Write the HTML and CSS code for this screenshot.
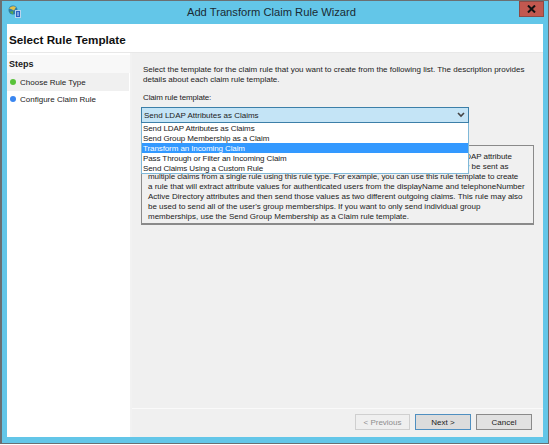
FILE: index.html
```html
<!DOCTYPE html>
<html lang="en">
<head>
  <meta charset="UTF-8">
  <title>Add Transform Claim Rule Wizard</title>
  <link rel="stylesheet" href="styles.css">
</head>
<body>
  <div class="window">
    <div class="titlebar">
      <svg class="app-icon" width="13" height="13" viewBox="0 0 13 13">
        <circle cx="5" cy="5" r="4.5" fill="#2f7fa8"/>
        <path d="M1 3.5 Q4 0 8 2 L6 5.5 L3 4 Z" fill="#e3c04a"/>
        <path d="M1.5 7 L5 6 L5 9.5 Z" fill="#5aa84a"/>
        <rect x="7.5" y="5.5" width="5" height="7" fill="#2b5fc0" stroke="#b8d4ee" stroke-width="1"/>
        <path d="M9 8 H11 M9 10 H11" stroke="#cfe2f5" stroke-width="1"/>
      </svg>
      <span class="title">Add Transform Claim Rule Wizard</span>
      <div class="close-btn">
        <svg width="9" height="8" viewBox="0 0 9 8"><path d="M1 0.5 L8 7.5 M8 0.5 L1 7.5" stroke="#111" stroke-width="2"/></svg>
      </div>
    </div>
    <div class="client">
      <div class="page-header">Select Rule Template</div>
      <div class="main">
        <div class="steps">
          <div class="steps-head">Steps</div>
          <div class="step current"><span class="dot green"></span>Choose Rule Type</div>
          <div class="step"><span class="dot blue"></span>Configure Claim Rule</div>
        </div>
        <div class="content">
          <div class="pane">
            <p class="intro">Select the template for the claim rule that you want to create from the following list. The description provides<br>details about each claim rule template.</p>
            <label class="field-label">Claim rule template:</label>
            <div class="combo-wrap">
              <div class="combo">
                <span>Send LDAP Attributes as Claims</span>
                <svg width="8" height="6" viewBox="0 0 8 6"><path d="M1 1 L4 4 L7 1" fill="none" stroke="#444" stroke-width="1.6"/></svg>
              </div>
              <ul class="dropdown">
                <li>Send LDAP Attributes as Claims</li>
                <li>Send Group Membership as a Claim</li>
                <li class="selected">Transform an Incoming Claim</li>
                <li>Pass Through or Filter an Incoming Claim</li>
                <li>Send Claims Using a Custom Rule</li>
              </ul>
            </div>
            <div class="description">
              <div class="tight">Using the Send LDAP Attributes as Claims rule template you can select attributes from an LDAP attribute</div>
              <div>store such as Active Directory to send as claims to the relying party. Multiple attributes may be sent as</div>
              <div class="tight">multiple claims from a single rule using this rule type. For example, you can use this rule template to create</div>
              <div>a rule that will extract attribute values for authenticated users from the displayName and telephoneNumber</div>
              <div>Active Directory attributes and then send those values as two different outgoing claims. This rule may also</div>
              <div>be used to send all of the user's group memberships. If you want to only send individual group</div>
              <div>memberships, use the Send Group Membership as a Claim rule template.</div>
            </div>
          </div>
          <div class="button-bar">
            <button class="btn disabled">&lt; Previous</button>
            <button class="btn default">Next &gt;</button>
            <button class="btn cancel">Cancel</button>
          </div>
        </div>
      </div>
    </div>
  </div>
</body>
</html>
```

FILE: styles.css
```css
html, body {
  margin: 0;
  padding: 0;
}

body {
  width: 549px;
  height: 445px;
  overflow: hidden;
  background-color: #fff;
  font-family: "Liberation Sans", Arial, sans-serif;
  font-size: 8px;
  color: #222;
}

.window {
  box-sizing: border-box;
  width: 549px;
  height: 444px;
  display: flex;
  flex-direction: column;
  background-color: #63c6e8;
  border: 1px solid #6b6f72;
  border-left-width: 2px;
  padding: 0 5px 6px 5px;
}

.titlebar {
  height: 23px;
  flex-shrink: 0;
  display: flex;
  align-items: center;
}

.app-icon {
  margin-left: 1px;
  margin-top: -2px;
}

.title {
  flex: 1;
  text-align: center;
  font-size: 11.2px;
  color: #1a2a33;
  margin-top: -2px;
  padding-left: 3px;
}

.close-btn {
  box-sizing: border-box;
  width: 25px;
  height: 16px;
  align-self: flex-start;
  margin-right: -1px;
  background-color: #c2584f;
  border: 1px solid #8d4a45;
  display: flex;
  align-items: center;
  justify-content: center;
}

.client {
  flex: 1;
  display: flex;
  flex-direction: column;
  background-color: #fff;
  min-height: 0;
}

.page-header {
  box-sizing: border-box;
  height: 29px;
  flex-shrink: 0;
  padding: 9px 0 0 2px;
  font-size: 11.7px;
  line-height: 13px;
  font-weight: bold;
  color: #111;
  border-bottom: 1px solid #e8e8e8;
}

.main {
  flex: 1;
  display: flex;
  min-height: 0;
}

.steps {
  width: 123px;
  flex-shrink: 0;
  border-right: 2px solid #f2f2f2;
  padding-top: 2px;
}

.steps-head {
  height: 18px;
  line-height: 18px;
  padding-left: 2px;
  font-size: 9px;
  font-weight: bold;
  background-color: #f8f8f8;
}

.step {
  height: 16px;
  display: flex;
  align-items: center;
  padding-left: 3px;
}

.step.current {
  height: 18px;
  margin-right: 1px;
  background-color: #f0f0f0;
}

.dot {
  width: 6px;
  height: 6px;
  border-radius: 50%;
  margin-right: 4px;
}

.dot.green {
  background-color: #58c23a;
}

.dot.blue {
  background-color: #3a86f0;
}

.content {
  flex: 1;
  display: flex;
  flex-direction: column;
  background-color: #f0f0f0;
  min-width: 0;
}

.pane {
  flex: 1;
  padding: 12px 9px 0 9px;
}

.intro {
  margin: 0 0 7px;
  padding-left: 2px;
  line-height: 10px;
  white-space: nowrap;
}

.field-label {
  display: block;
  padding-left: 2px;
  line-height: 12px;
  margin-bottom: 3px;
  letter-spacing: -0.15px;
}

.combo-wrap {
  position: relative;
  width: 328px;
}

.combo {
  box-sizing: border-box;
  height: 16px;
  display: flex;
  align-items: center;
  justify-content: space-between;
  padding: 0 3px 0 2px;
  background-color: #c4e4f6;
  border: 1px solid #3c7fa8;
}

.dropdown {
  position: absolute;
  top: 16px;
  left: 0;
  right: 0;
  margin: 0;
  padding: 0;
  list-style: none;
  background-color: #fff;
  border: 1px solid #7fb8d8;
  border-top: none;
}

.dropdown li {
  height: 10px;
  line-height: 12px;
  padding-left: 1px;
  letter-spacing: -0.1px;
}

.dropdown li.selected {
  background-color: #3399ff;
  color: #fff;
}

.description {
  box-sizing: border-box;
  height: 80px;
  margin-top: 22px;
  padding: 6px 0 0 6px;
  border: 1px solid #8a8a8a;
  border-bottom-width: 2px;
  line-height: 10px;
  white-space: nowrap;
  overflow: hidden;
}

.tight {
  letter-spacing: -0.07px;
}

.button-bar {
  box-sizing: border-box;
  height: 29px;
  flex-shrink: 0;
  display: flex;
  justify-content: flex-end;
  align-items: center;
  gap: 5px;
  padding: 0 11px 2px 0;
  border-top: 1px solid #fafafa;
}

.btn {
  width: 56px;
  height: 16px;
  padding: 0;
  font-family: inherit;
  font-size: 8px;
  color: #222;
  background-color: #e1e1e1;
  border: 1px solid #adadad;
}

.btn.disabled {
  width: 55px;
  color: #8e8e8e;
  background-color: #efefef;
  border-color: #cfcfcf;
}

.btn.default {
  background-color: #dcdcdc;
  border-color: #4f8fc0;
}

.btn.cancel {
  border-color: #8a8a8a;
}
```
